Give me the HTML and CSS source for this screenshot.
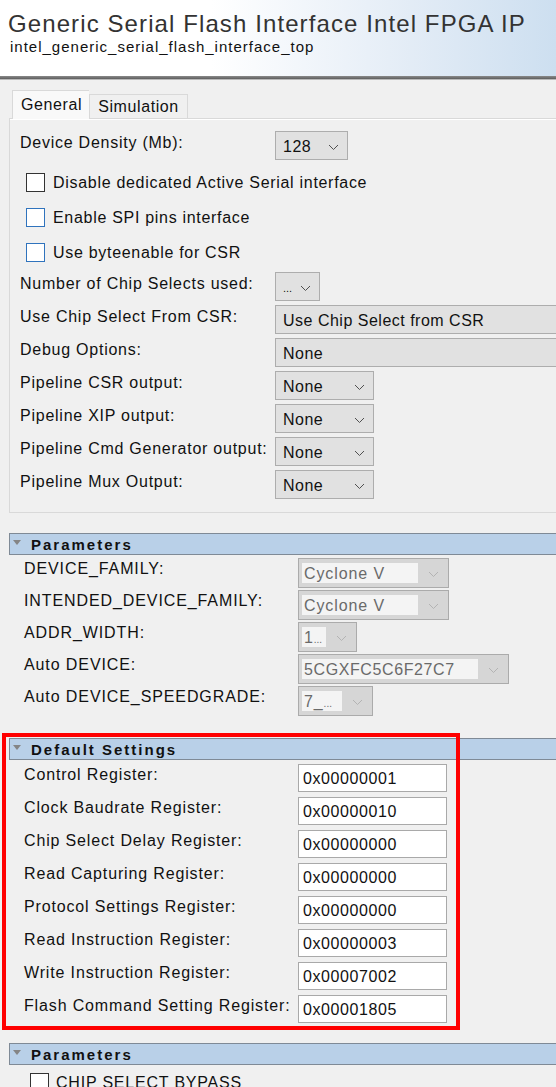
FILE: index.html
```html
<!DOCTYPE html>
<html>
<head>
<meta charset="utf-8">
<link rel="stylesheet" href="styles.css">
</head>
<body>
<div class="page">
  <header class="hdr">
    <div class="title">Generic Serial Flash Interface Intel FPGA IP</div>
    <div class="sub">intel_generic_serial_flash_interface_top</div>
  </header>
  <div class="rule"></div>

  <div class="tabs">
    <div class="tab active">General</div>
    <div class="tab">Simulation</div>
  </div>

  <div class="panel">
    <div class="row">
      <span class="lbl">Device Density (Mb):</span>
      <div class="combo w-dens"><span>128</span><svg class="chev" width="11" height="7" viewBox="0 0 11 7"><path d="M1 1l4.5 4.5L10 1" /></svg></div>
    </div>
    <div class="chk-row first"><span class="box dark"></span><span>Disable dedicated Active Serial interface</span></div>
    <div class="chk-row"><span class="box blue"></span><span>Enable SPI pins interface</span></div>
    <div class="chk-row"><span class="box blue"></span><span>Use byteenable for CSR</span></div>
    <div class="row sel first-sel">
      <span class="lbl">Number of Chip Selects used:</span>
      <div class="combo w-num"><span class="ell">...</span><svg class="chev" width="11" height="7" viewBox="0 0 11 7"><path d="M1 1l4.5 4.5L10 1" /></svg></div>
    </div>
    <div class="row sel">
      <span class="lbl">Use Chip Select From CSR:</span>
      <div class="combo w-wide"><span>Use Chip Select from CSR</span></div>
    </div>
    <div class="row sel">
      <span class="lbl">Debug Options:</span>
      <div class="combo w-wide"><span>None</span></div>
    </div>
    <div class="row sel">
      <span class="lbl">Pipeline CSR output:</span>
      <div class="combo w-pipe"><span>None</span><svg class="chev" width="11" height="7" viewBox="0 0 11 7"><path d="M1 1l4.5 4.5L10 1" /></svg></div>
    </div>
    <div class="row sel">
      <span class="lbl">Pipeline XIP output:</span>
      <div class="combo w-pipe"><span>None</span><svg class="chev" width="11" height="7" viewBox="0 0 11 7"><path d="M1 1l4.5 4.5L10 1" /></svg></div>
    </div>
    <div class="row sel">
      <span class="lbl">Pipeline Cmd Generator output:</span>
      <div class="combo w-pipe"><span>None</span><svg class="chev" width="11" height="7" viewBox="0 0 11 7"><path d="M1 1l4.5 4.5L10 1" /></svg></div>
    </div>
    <div class="row sel">
      <span class="lbl">Pipeline Mux Output:</span>
      <div class="combo w-pipe"><span>None</span><svg class="chev" width="11" height="7" viewBox="0 0 11 7"><path d="M1 1l4.5 4.5L10 1" /></svg></div>
    </div>
  </div>

  <section class="sec sec-params">
    <div class="sec-hd"><span class="tri"></span><span class="sec-title">Parameters</span></div>
    <div class="prow first">
      <span class="plbl">DEVICE_FAMILY:</span>
      <div class="dsel w-fam"><span class="val">Cyclone V</span><svg class="chev dis" width="11" height="7" viewBox="0 0 11 7"><path d="M1 1l4.5 4.5L10 1" /></svg></div>
    </div>
    <div class="prow">
      <span class="plbl">INTENDED_DEVICE_FAMILY:</span>
      <div class="dsel w-fam"><span class="val">Cyclone V</span><svg class="chev dis" width="11" height="7" viewBox="0 0 11 7"><path d="M1 1l4.5 4.5L10 1" /></svg></div>
    </div>
    <div class="prow">
      <span class="plbl">ADDR_WIDTH:</span>
      <div class="dsel w-addr"><span class="val">1<span class="sm">...</span></span><svg class="chev dis" width="11" height="7" viewBox="0 0 11 7"><path d="M1 1l4.5 4.5L10 1" /></svg></div>
    </div>
    <div class="prow">
      <span class="plbl">Auto DEVICE:</span>
      <div class="dsel w-dev"><span class="val">5CGXFC5C6F27C7</span><svg class="chev dis" width="11" height="7" viewBox="0 0 11 7"><path d="M1 1l4.5 4.5L10 1" /></svg></div>
    </div>
    <div class="prow">
      <span class="plbl">Auto DEVICE_SPEEDGRADE:</span>
      <div class="dsel w-speed"><span class="val">7_<span class="sm">...</span></span><svg class="chev dis" width="11" height="7" viewBox="0 0 11 7"><path d="M1 1l4.5 4.5L10 1" /></svg></div>
    </div>
  </section>

  <section class="sec sec-default">
    <div class="sec-hd"><span class="tri"></span><span class="sec-title">Default Settings</span></div>
    <div class="drow first"><span class="dlbl">Control Register:</span><div class="inp">0x00000001</div></div>
    <div class="drow"><span class="dlbl">Clock Baudrate Register:</span><div class="inp">0x00000010</div></div>
    <div class="drow"><span class="dlbl">Chip Select Delay Register:</span><div class="inp">0x00000000</div></div>
    <div class="drow"><span class="dlbl">Read Capturing Register:</span><div class="inp">0x00000000</div></div>
    <div class="drow"><span class="dlbl">Protocol Settings Register:</span><div class="inp">0x00000000</div></div>
    <div class="drow"><span class="dlbl">Read Instruction Register:</span><div class="inp">0x00000003</div></div>
    <div class="drow"><span class="dlbl">Write Instruction Register:</span><div class="inp">0x00007002</div></div>
    <div class="drow"><span class="dlbl">Flash Command Setting Register:</span><div class="inp">0x00001805</div></div>
  </section>

  <section class="sec sec-params2">
    <div class="sec-hd"><span class="tri"></span><span class="sec-title">Parameters</span></div>
    <div class="bchk"><span class="box dark"></span><span>CHIP SELECT BYPASS</span></div>
  </section>

  <div class="redbox"></div>
</div>
</body>
</html>
```

FILE: styles.css
```css
html, body {
  margin: 0;
  padding: 0;
}
body {
  background: #f0f0f0;
  font-family: "Liberation Sans", Arial, sans-serif;
  color: #111;
  width: 556px;
  height: 1087px;
  overflow: hidden;
}
.page {
  position: relative;
  width: 556px;
  height: 1087px;
  overflow: hidden;
}

/* header */
.hdr {
  height: 76px;
  box-sizing: border-box;
  padding: 9px 0 0 8px;
  background: linear-gradient(90deg, #ffffff 0%, #ffffff 38%, #e6eef7 70%, #cddff0 100%);
}
.title {
  font-size: 24px;
  line-height: 29px;
  color: #333;
  letter-spacing: 1.1px;
}
.sub {
  font-size: 15px;
  line-height: 18px;
  color: #111;
  letter-spacing: 1px;
  margin-left: 2px;
}
.rule {
  height: 3px;
  background: linear-gradient(180deg, #8a8a8a, #5e5e5e);
  border-bottom: 1px solid #b8b8b8;
}

/* tabs */
.tabs {
  display: flex;
  align-items: flex-end;
  height: 28px;
  margin-top: 10px;
  padding-left: 12px;
  position: relative;
  z-index: 2;
}
.tab {
  height: 24px;
  box-sizing: border-box;
  border: 1px solid #d9d9d9;
  border-bottom: none;
  background: #f0f0f0;
  padding: 0 8px;
  font-size: 16px;
  line-height: 24px;
  letter-spacing: 0.6px;
}
.tab.active {
  height: 29px;
  margin-bottom: -1px;
  background: #f9f9f9;
  padding: 2px 7px 0 8px;
  border-right: none;
}

/* panel */
.panel {
  margin-left: 9px;
  width: 600px;
  box-sizing: border-box;
  height: 395px;
  border: 1px solid #d9d9d9;
  box-shadow: inset 0 1px 0 #ffffff;
  background: #f0f0f0;
  padding: 12px 0 0 10px;
}
.row {
  display: flex;
  align-items: flex-start;
  height: 29px;
}
.row.sel {
  margin-top: 4px;
}
.row.first-sel {
  margin-top: 2px;
}
.lbl {
  width: 255px;
  flex: none;
  font-size: 16px;
  line-height: 24px;
  letter-spacing: 0.75px;
  white-space: nowrap;
}
.combo {
  height: 29px;
  box-sizing: border-box;
  border: 1px solid #adadad;
  background: #e1e1e1;
  display: flex;
  align-items: center;
  justify-content: space-between;
  padding: 0 8px 0 7px;
  font-size: 16px;
  letter-spacing: 0.5px;
  white-space: nowrap;
  overflow: hidden;
}
.combo span {
  padding-top: 2px;
}
.w-dens { width: 73px; }
.w-num { width: 45px; }
.w-pipe { width: 99px; }
.w-wide { width: 320px; }
.ell {
  font-size: 11px;
  letter-spacing: 0;
}
.chev {
  flex: none;
  margin-top: 3px;
}
.chev path {
  fill: none;
  stroke: #505050;
  stroke-width: 1;
}
.chev.dis path {
  stroke: #b3b3b3;
}

/* checkboxes */
.chk-row {
  display: flex;
  align-items: center;
  height: 35px;
  padding-left: 6px;
  gap: 8px;
  font-size: 16px;
  letter-spacing: 0.7px;
  white-space: nowrap;
}
.chk-row.first {
  margin-top: 5px;
}
.box {
  width: 19px;
  height: 19px;
  box-sizing: border-box;
  background: #fff;
  flex: none;
}
.box.dark { border: 1px solid #333; }
.box.blue { border: 1px solid #2f73bd; }

/* sections */
.sec-hd {
  margin-left: 9px;
  height: 22px;
  box-sizing: border-box;
  border: 1px solid #7f8a96;
  border-right: none;
  background: #b9d0e8;
  display: flex;
  align-items: center;
  padding-left: 3px;
}
.tri {
  width: 0;
  height: 0;
  border-left: 4.5px solid transparent;
  border-right: 4.5px solid transparent;
  border-top: 5px solid #858585;
  margin-right: 10px;
  margin-top: -4px;
}
.sec-title {
  font-size: 15px;
  font-weight: bold;
  letter-spacing: 2px;
  color: #111;
  padding-top: 1px;
}
.sec-params {
  margin-top: 20px;
}
.sec-default {
  margin-top: 22px;
}
.sec-params2 {
  margin-top: 20px;
}

/* parameter rows (disabled selects) */
.prow {
  display: flex;
  align-items: flex-start;
  height: 30px;
  margin-top: 2px;
  padding-left: 24px;
}
.prow.first {
  margin-top: 3px;
}
.plbl {
  width: 274px;
  flex: none;
  font-size: 16px;
  line-height: 22px;
  letter-spacing: 0.9px;
  white-space: nowrap;
}
.dsel {
  height: 30px;
  box-sizing: border-box;
  border: 1px solid #ababab;
  background: #d6d6d6;
  display: flex;
  align-items: center;
  padding: 0 0 0 3px;
}
.dsel .val {
  height: 20px;
  background: #f4f4f4;
  color: #6a6a6a;
  font-size: 16px;
  line-height: 22px;
  letter-spacing: 0.9px;
  padding-left: 2px;
  box-sizing: border-box;
  overflow: hidden;
  white-space: nowrap;
  flex: none;
}
.dsel .sm {
  font-size: 10px;
  letter-spacing: 0;
}
.dsel .chev {
  margin: 2px auto 0;
}
.w-fam { width: 151px; }
.w-fam .val { width: 116px; }
.w-addr { width: 59px; }
.w-addr .val { width: 24px; }
.w-dev { width: 211px; }
.w-dev .val { width: 176px; letter-spacing: 0.6px; }
.w-speed { width: 75px; }
.w-speed .val { width: 40px; }

/* default settings rows */
.drow {
  display: flex;
  align-items: flex-start;
  height: 28px;
  margin-top: 5px;
  padding-left: 24px;
}
.drow.first {
  margin-top: 4px;
}
.dlbl {
  width: 274px;
  flex: none;
  font-size: 16px;
  line-height: 22px;
  letter-spacing: 0.85px;
  white-space: nowrap;
}
.inp {
  width: 149px;
  height: 28px;
  box-sizing: border-box;
  border: 1px solid #a9a9a9;
  background: #fff;
  padding-left: 4px;
  font-size: 16px;
  line-height: 28px;
  letter-spacing: 0.6px;
}

/* last checkbox */
.bchk {
  display: flex;
  align-items: center;
  gap: 7px;
  padding-left: 30px;
  margin-top: 8px;
  height: 19px;
  font-size: 16px;
  letter-spacing: 0.8px;
  white-space: nowrap;
}

/* annotation overlay */
.redbox {
  position: absolute;
  left: 2px;
  top: 733px;
  width: 458px;
  height: 297px;
  box-sizing: border-box;
  border: 4px solid #ff0000;
  pointer-events: none;
}
```
